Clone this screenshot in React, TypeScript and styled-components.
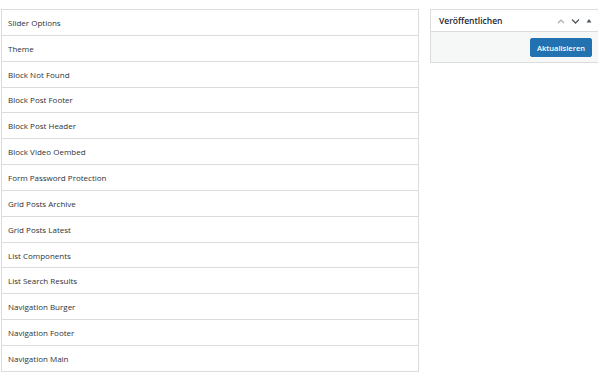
import styled, { createGlobalStyle } from 'styled-components';

const GlobalStyle = createGlobalStyle`
  html, body {
    margin: 0;
    padding: 0;
    background: #fff;
    overflow: hidden;
  }
  body {
    font-family: "Open Sans", "Liberation Sans", sans-serif;
    color: #1d2327;
  }
`;

const items = [
  'Slider Options',
  'Theme',
  'Block Not Found',
  'Block Post Footer',
  'Block Post Header',
  'Block Video Oembed',
  'Form Password Protection',
  'Grid Posts Archive',
  'Grid Posts Latest',
  'List Components',
  'List Search Results',
  'Navigation Burger',
  'Navigation Footer',
  'Navigation Main',
];

const App = () => {
  return (
    <>
      <GlobalStyle />
      <Page>
        <List>
          {items.map((label) => (
            <Row key={label}>{label}</Row>
          ))}
        </List>
        <Sidebar>
          <Header>
            <Title>Veröffentlichen</Title>
            <Controls>
              <svg width="8" height="6" viewBox="0 0 8 6">
                <path d="M1 5 L4 2 L7 5" fill="none" stroke="#a7aaad" strokeWidth="1.2" />
              </svg>
              <svg width="9" height="6" viewBox="0 0 9 6">
                <path d="M1 1.5 L4.5 5 L8 1.5" fill="none" stroke="#50575e" strokeWidth="1.3" />
              </svg>
              <svg width="6" height="5" viewBox="0 0 6 5">
                <path d="M0.5 4.5 L3 1 L5.5 4.5 Z" fill="#50575e" />
              </svg>
            </Controls>
          </Header>
          <Body>
            <Button>Aktualisieren</Button>
          </Body>
        </Sidebar>
      </Page>
    </>
  );
};

export default App;

const Page = styled.div`
  display: flex;
  align-items: flex-start;
  gap: 11px;
  padding: 9px 0 0 1px;
`;

const List = styled.div`
  width: 418px;
  flex-shrink: 0;
  box-sizing: border-box;
  border: 1px solid #dcdcde;
  border-bottom: none;
  background: #fff;
`;

const Row = styled.div`
  height: 25.85px;
  box-sizing: border-box;
  display: flex;
  align-items: center;
  padding: 0 0 0 6px;
  border-bottom: 1px solid #dcdcde;
  font-size: 8px;
  color: #2c3338;
`;

const Sidebar = styled.div`
  width: 168px;
  flex-shrink: 0;
  box-sizing: border-box;
  border: 1px solid #dcdcde;
  border-right: none;
  background: #fff;
`;

const Header = styled.div`
  height: 22px;
  box-sizing: border-box;
  display: flex;
  align-items: center;
  justify-content: space-between;
  padding: 0 6px 0 8px;
  border-bottom: 1px solid #dcdcde;
`;

const Title = styled.span`
  font-size: 8.5px;
  font-weight: 600;
  color: #1d2327;
`;

const Controls = styled.div`
  display: flex;
  align-items: center;
  gap: 6px;
`;

const Body = styled.div`
  display: flex;
  justify-content: flex-end;
  padding: 6px 6px 5px;
  background: #f6f7f7;
`;

const Button = styled.button`
  height: 19px;
  padding: 0 6px;
  border: 1px solid #2271b1;
  border-radius: 2px;
  background: #2271b1;
  color: #fff;
  font-family: "Open Sans", "Liberation Sans", sans-serif;
  font-size: 7.5px;
  font-weight: 600;
  cursor: pointer;
`;
